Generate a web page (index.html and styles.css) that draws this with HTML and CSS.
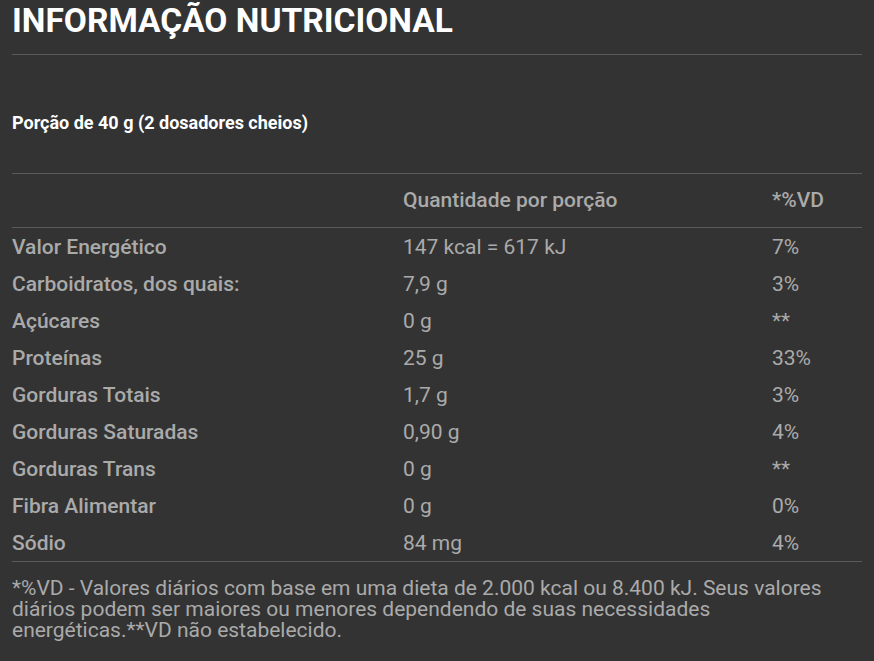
FILE: index.html
```html
<!DOCTYPE html>
<html lang="pt-BR">
<head>
<meta charset="utf-8">
<title>Informação Nutricional</title>
<link rel="stylesheet" href="styles.css">
</head>
<body>
<section class="nutri">
  <h1 class="title">INFORMAÇÃO NUTRICIONAL</h1>
  <p class="portion">Porção de 40 g (2 dosadores cheios)</p>
  <div class="table">
    <div class="row head">
      <span></span><span>Quantidade por porção</span><span>*%VD</span>
    </div>
    <div class="body">
      <div class="row"><span class="lbl">Valor Energético</span><span>147 kcal = 617 kJ</span><span>7%</span></div>
      <div class="row"><span class="lbl">Carboidratos, dos quais:</span><span>7,9 g</span><span>3%</span></div>
      <div class="row"><span class="lbl">Açúcares</span><span>0 g</span><span>**</span></div>
      <div class="row"><span class="lbl">Proteínas</span><span>25 g</span><span>33%</span></div>
      <div class="row"><span class="lbl">Gorduras Totais</span><span>1,7 g</span><span>3%</span></div>
      <div class="row"><span class="lbl">Gorduras Saturadas</span><span>0,90 g</span><span>4%</span></div>
      <div class="row"><span class="lbl">Gorduras Trans</span><span>0 g</span><span>**</span></div>
      <div class="row"><span class="lbl">Fibra Alimentar</span><span>0 g</span><span>0%</span></div>
      <div class="row"><span class="lbl">Sódio</span><span>84 mg</span><span>4%</span></div>
    </div>
  </div>
  <p class="note">*%VD - Valores diários com base em uma dieta de 2.000 kcal ou 8.400 kJ. Seus valores diários podem ser maiores ou menores dependendo de suas necessidades energéticas.**VD não estabelecido.</p>
</section>
</body>
</html>
```
FILE: styles.css
```css
html, body {
  margin: 0;
  padding: 0;
  background: #333333;
}
body {
  font-family: Roboto, "Liberation Sans", sans-serif;
  color: #aaaaaa;
}
.nutri {
  padding: 0 12px;
}
.title {
  margin: 0;
  font-size: 33.5px;
  font-weight: 700;
  line-height: 42px;
  color: #ffffff;
  padding-bottom: 12px;
  border-bottom: 1px solid #5a5a5a;
}
.portion {
  margin: 58px 0 0;
  font-size: 18px;
  font-weight: 700;
  line-height: 20px;
  color: #ffffff;
}
.table {
  margin-top: 40px;
  border-top: 1px solid #5a5a5a;
}
.row {
  display: grid;
  grid-template-columns: 391px 369px 1fr;
  align-items: center;
  height: 37px;
  font-size: 21px;
  line-height: 24px;
}
.row.head {
  font-weight: 500;
  border-bottom: 1px solid #5a5a5a;
  padding-bottom: 1px;
  box-sizing: border-box;
  height: 54px;
}
.body {
  border-bottom: 1px solid #5a5a5a;
}
.lbl {
  font-weight: 500;
}
.note {
  margin: 16px 0 0;
  font-size: 21px;
  line-height: 21px;
  max-width: 815px;
}
```
